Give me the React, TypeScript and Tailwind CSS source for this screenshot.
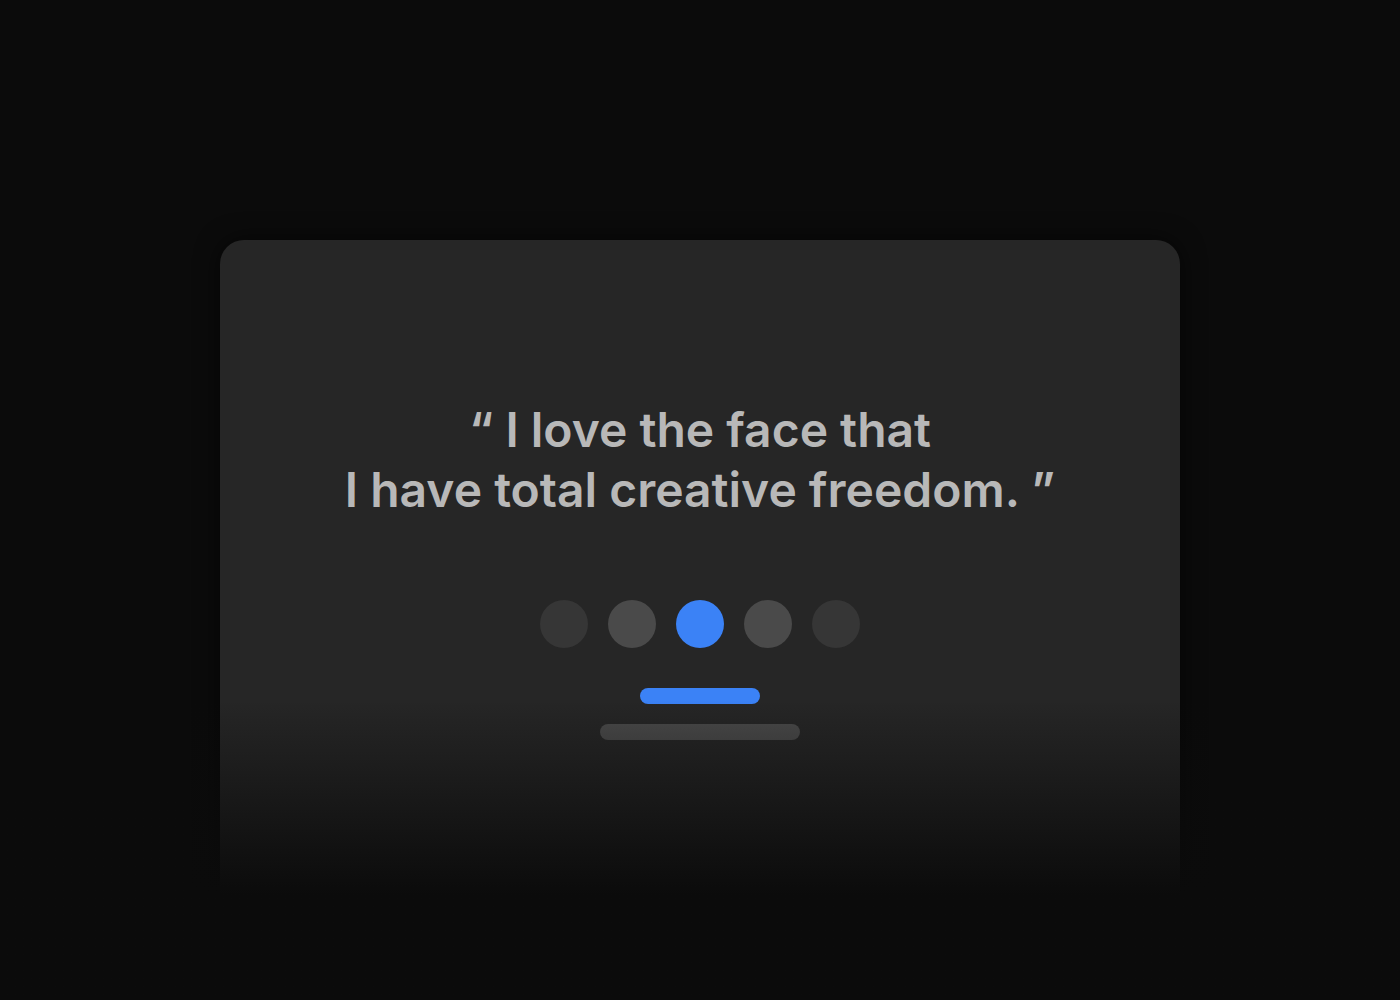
import React from 'react'

const dots = ['bg-[#363636]', 'bg-[#4a4a4a]', 'bg-[#3b82f6]', 'bg-[#4a4a4a]', 'bg-[#363636]']

function App() {
    return (
        <div className="w-[1400px] h-[1000px] bg-[#0b0b0b] overflow-hidden relative" style={{ fontFamily: 'Inter, "Noto Sans", sans-serif' }}>
            <div className="pt-[240px] flex justify-center">
                <div className="w-[960px] h-[760px] rounded-[24px] bg-[#262626] shadow-[0_0_24px_rgba(0,0,0,0.6)] flex flex-col items-center pt-[160px]">
                    <p className="text-[48px] leading-[60px] font-semibold text-[#b8b8b8] text-center">
                        “ I love the face that
                        <br />
                        I have total creative freedom. ”
                    </p>

                    <div className="flex gap-5 mt-[80px]">
                        {dots.map((c, i) => (
                            <div key={i} className={`w-12 h-12 rounded-full ${c}`} />
                        ))}
                    </div>

                    <div className="w-[120px] h-4 rounded-full bg-[#3b82f6] mt-10" />
                    <div className="w-[200px] h-4 rounded-full bg-[#4a4a4a] mt-5" />
                </div>
            </div>
            {/* fade out the bottom of the card */}
            <div className="absolute left-0 right-0 top-[700px] h-[300px] bg-gradient-to-b from-transparent via-[#0b0b0b] via-65% to-[#0b0b0b]" />
        </div>
    )
}

export default App
